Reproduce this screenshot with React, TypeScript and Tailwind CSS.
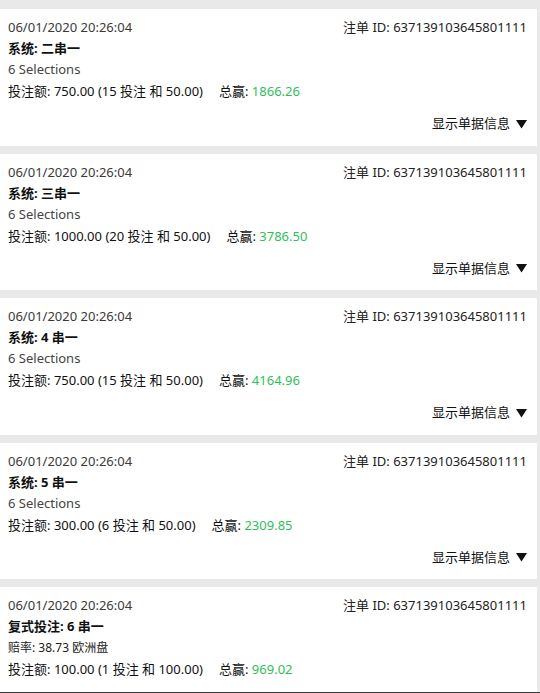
import { ReactNode } from 'react';

type Bet = {
  title: string;
  system: string;
  sub: ReactNode;
  stake: string;
  detail: string;
  win: string;
  showToggle: boolean;
};

const bets: Bet[] = [
  { title: '系统:', system: '二串一', sub: '6 Selections', stake: '750.00', detail: '(15 投注 和 50.00)', win: '1866.26', showToggle: true },
  { title: '系统:', system: '三串一', sub: '6 Selections', stake: '1000.00', detail: '(20 投注 和 50.00)', win: '3786.50', showToggle: true },
  { title: '系统:', system: '4 串一', sub: '6 Selections', stake: '750.00', detail: '(15 投注 和 50.00)', win: '4164.96', showToggle: true },
  { title: '系统:', system: '5 串一', sub: '6 Selections', stake: '300.00', detail: '(6 投注 和 50.00)', win: '2309.85', showToggle: true },
  {
    title: '复式投注:',
    system: '6 串一',
    sub: <span className="text-[12px] text-[#222]">赔率: 38.73 欧洲盘</span>,
    stake: '100.00',
    detail: '(1 投注 和 100.00)',
    win: '969.02',
    showToggle: false,
  },
];

function BetCard({ bet }: { bet: Bet }) {
  return (
    <div className="mr-[3px] bg-white pl-2 pr-[10px] pt-2 pb-[11.5px] leading-[21px]">
      <div className="flex justify-between">
        <span className="text-[#3a3a3a]">06/01/2020 20:26:04</span>
        <span className="text-[#222]">注单 ID: 637139103645801111</span>
      </div>
      <div className="font-bold text-[#111]">
        {bet.title} {bet.system}
      </div>
      <div className="text-[#444]">{bet.sub}</div>
      <div className="mt-px text-[#111]">
        投注额: {bet.stake} {bet.detail}
        <span className="ml-4">总赢: </span>
        <span className="text-[#2fbf5a]">{bet.win}</span>
      </div>
      {bet.showToggle && (
        <div className="mt-[11px] flex items-center justify-end text-[#111]">
          显示单据信息
          <svg width="11" height="10" viewBox="0 0 11 10" className="ml-[6px]">
            <path d="M0 1 L11 1 L5.5 9.5 Z" fill="#111" />
          </svg>
        </div>
      )}
    </div>
  );
}

export default function App() {
  return (
    <div className="w-[540px] bg-[#e9e9e9] text-[13px] [font-family:'Noto_Sans','Noto_Sans_CJK_SC',sans-serif]">
      <div className="flex h-[692px] flex-col gap-2 overflow-hidden pt-[9px]">
        {bets.map((bet, i) => (
          <BetCard key={i} bet={bet} />
        ))}
      </div>
      <div className="h-px bg-[#3a3a3a]" />
    </div>
  );
}
